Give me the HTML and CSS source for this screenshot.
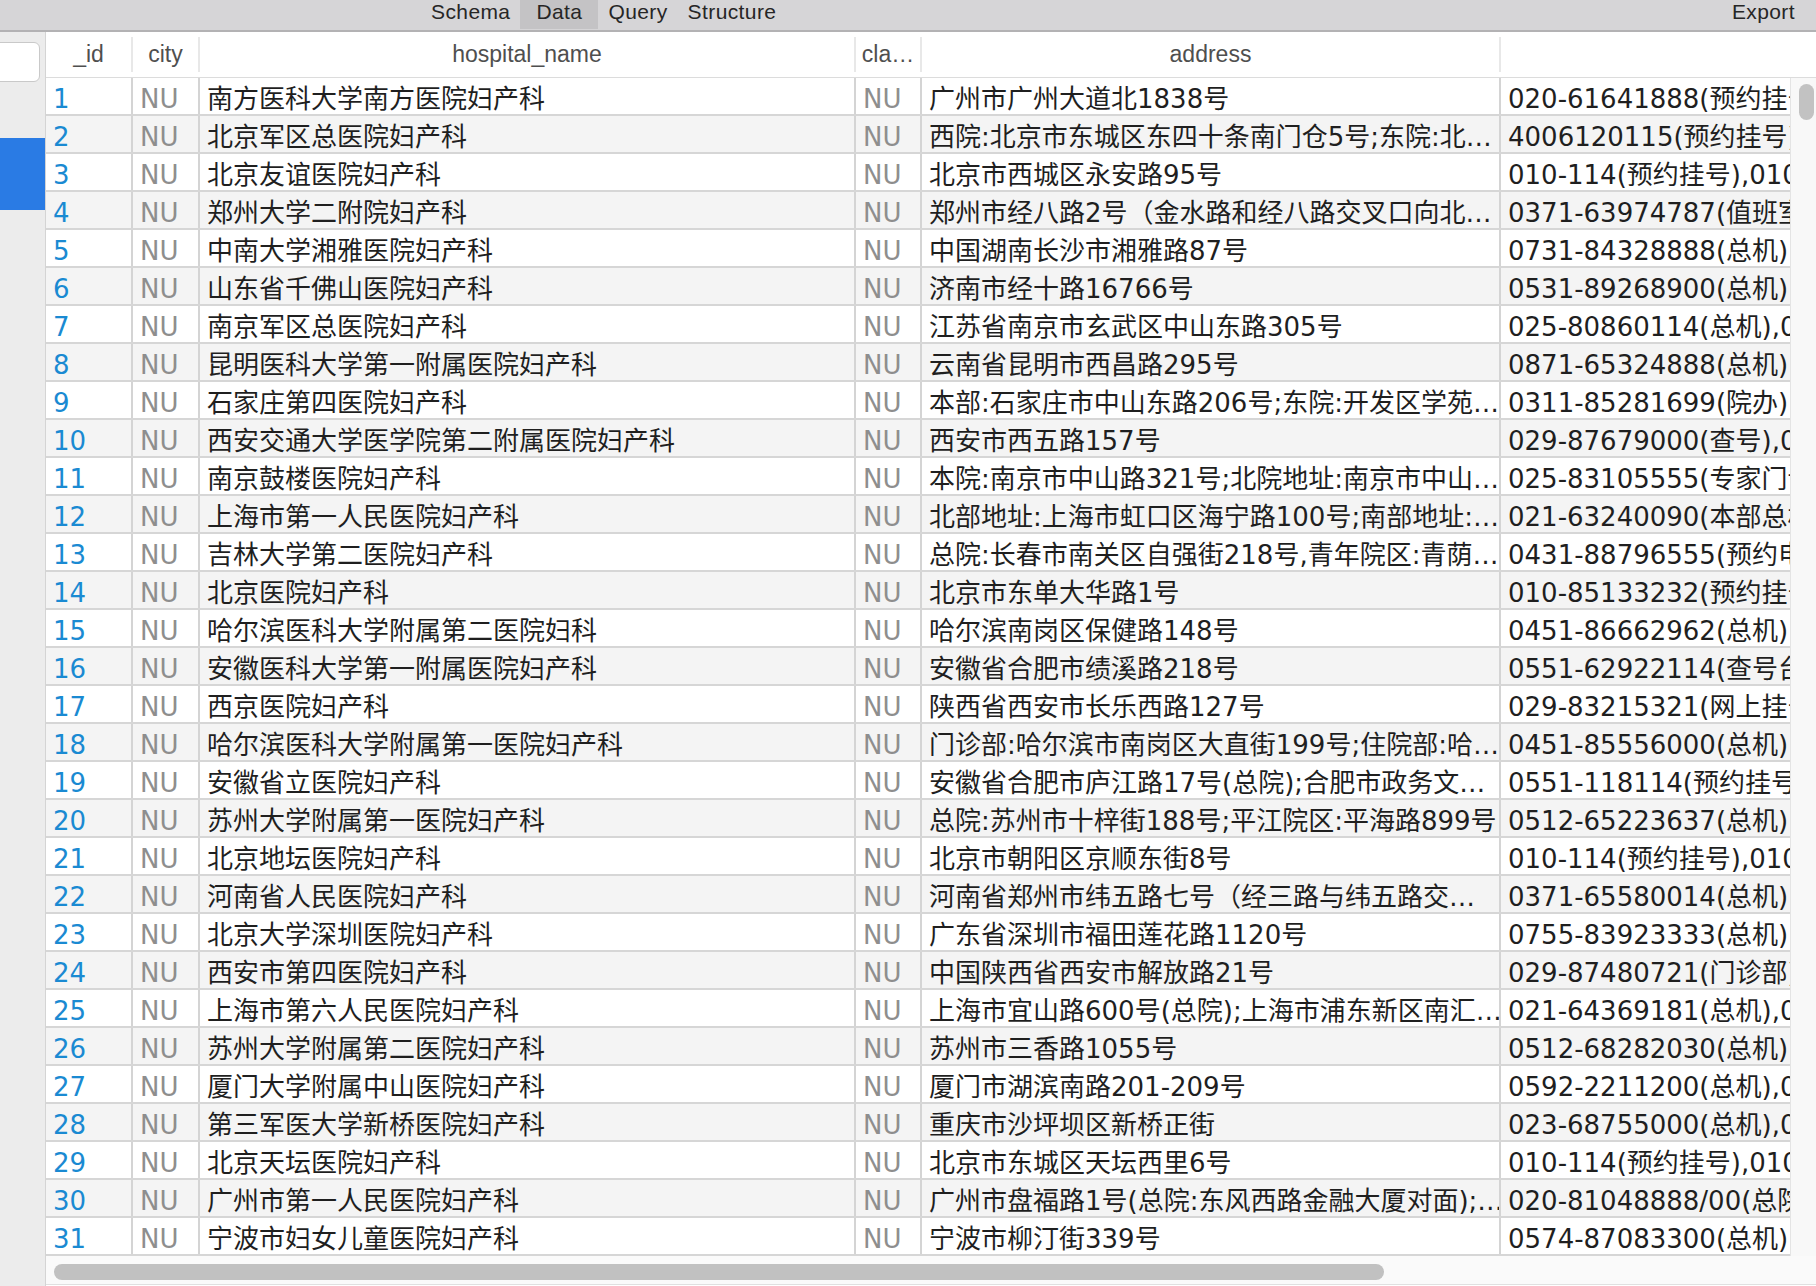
FILE: index.html
```html
<!DOCTYPE html>
<html lang="zh-CN">
<head>
<meta charset="utf-8">
<title>Data</title>
<link rel="stylesheet" href="styles.css">
</head>
<body>
<div class="toolbar">
  <nav class="tabs">
    <span class="tab">Schema</span>
    <span class="tab active">Data</span>
    <span class="tab">Query</span>
    <span class="tab">Structure</span>
  </nav>
  <span class="export">Export</span>
</div>
<div class="main">
  <aside class="sidebar">
    <div class="search"></div>
    <div class="selected"></div>
  </aside>
  <section class="grid">
    <div class="head">
      <span class="h">_id</span>
      <span class="h">city</span>
      <span class="h">hospital_name</span>
      <span class="h">cla…</span>
      <span class="h">address</span>
      <span class="h last"></span>
    </div>
    <div class="body">
      <div class="rows">
        <div class="row"><span class="c id">1</span><span class="c nu">NU</span><span class="c">南方医科大学南方医院妇产科</span><span class="c nu">NU</span><span class="c">广州市广州大道北1838号</span><span class="c last">020-61641888(预约挂号)</span></div>
        <div class="row"><span class="c id">2</span><span class="c nu">NU</span><span class="c">北京军区总医院妇产科</span><span class="c nu">NU</span><span class="c">西院:北京市东城区东四十条南门仓5号;东院:北…</span><span class="c last">4006120115(预约挂号)</span></div>
        <div class="row"><span class="c id">3</span><span class="c nu">NU</span><span class="c">北京友谊医院妇产科</span><span class="c nu">NU</span><span class="c">北京市西城区永安路95号</span><span class="c last">010-114(预约挂号),010-63014411</span></div>
        <div class="row"><span class="c id">4</span><span class="c nu">NU</span><span class="c">郑州大学二附院妇产科</span><span class="c nu">NU</span><span class="c">郑州市经八路2号（金水路和经八路交叉口向北…</span><span class="c last">0371-63974787(值班室)</span></div>
        <div class="row"><span class="c id">5</span><span class="c nu">NU</span><span class="c">中南大学湘雅医院妇产科</span><span class="c nu">NU</span><span class="c">中国湖南长沙市湘雅路87号</span><span class="c last">0731-84328888(总机)</span></div>
        <div class="row"><span class="c id">6</span><span class="c nu">NU</span><span class="c">山东省千佛山医院妇产科</span><span class="c nu">NU</span><span class="c">济南市经十路16766号</span><span class="c last">0531-89268900(总机)</span></div>
        <div class="row"><span class="c id">7</span><span class="c nu">NU</span><span class="c">南京军区总医院妇产科</span><span class="c nu">NU</span><span class="c">江苏省南京市玄武区中山东路305号</span><span class="c last">025-80860114(总机),025-80860000</span></div>
        <div class="row"><span class="c id">8</span><span class="c nu">NU</span><span class="c">昆明医科大学第一附属医院妇产科</span><span class="c nu">NU</span><span class="c">云南省昆明市西昌路295号</span><span class="c last">0871-65324888(总机)</span></div>
        <div class="row"><span class="c id">9</span><span class="c nu">NU</span><span class="c">石家庄第四医院妇产科</span><span class="c nu">NU</span><span class="c">本部:石家庄市中山东路206号;东院:开发区学苑…</span><span class="c last">0311-85281699(院办)</span></div>
        <div class="row"><span class="c id">10</span><span class="c nu">NU</span><span class="c">西安交通大学医学院第二附属医院妇产科</span><span class="c nu">NU</span><span class="c">西安市西五路157号</span><span class="c last">029-87679000(查号),029-87678888</span></div>
        <div class="row"><span class="c id">11</span><span class="c nu">NU</span><span class="c">南京鼓楼医院妇产科</span><span class="c nu">NU</span><span class="c">本院:南京市中山路321号;北院地址:南京市中山…</span><span class="c last">025-83105555(专家门诊)</span></div>
        <div class="row"><span class="c id">12</span><span class="c nu">NU</span><span class="c">上海市第一人民医院妇产科</span><span class="c nu">NU</span><span class="c">北部地址:上海市虹口区海宁路100号;南部地址:…</span><span class="c last">021-63240090(本部总机)</span></div>
        <div class="row"><span class="c id">13</span><span class="c nu">NU</span><span class="c">吉林大学第二医院妇产科</span><span class="c nu">NU</span><span class="c">总院:长春市南关区自强街218号,青年院区:青荫…</span><span class="c last">0431-88796555(预约电话)</span></div>
        <div class="row"><span class="c id">14</span><span class="c nu">NU</span><span class="c">北京医院妇产科</span><span class="c nu">NU</span><span class="c">北京市东单大华路1号</span><span class="c last">010-85133232(预约挂号)</span></div>
        <div class="row"><span class="c id">15</span><span class="c nu">NU</span><span class="c">哈尔滨医科大学附属第二医院妇科</span><span class="c nu">NU</span><span class="c">哈尔滨南岗区保健路148号</span><span class="c last">0451-86662962(总机)</span></div>
        <div class="row"><span class="c id">16</span><span class="c nu">NU</span><span class="c">安徽医科大学第一附属医院妇产科</span><span class="c nu">NU</span><span class="c">安徽省合肥市绩溪路218号</span><span class="c last">0551-62922114(查号台)</span></div>
        <div class="row"><span class="c id">17</span><span class="c nu">NU</span><span class="c">西京医院妇产科</span><span class="c nu">NU</span><span class="c">陕西省西安市长乐西路127号</span><span class="c last">029-83215321(网上挂号)</span></div>
        <div class="row"><span class="c id">18</span><span class="c nu">NU</span><span class="c">哈尔滨医科大学附属第一医院妇产科</span><span class="c nu">NU</span><span class="c">门诊部:哈尔滨市南岗区大直街199号;住院部:哈…</span><span class="c last">0451-85556000(总机)</span></div>
        <div class="row"><span class="c id">19</span><span class="c nu">NU</span><span class="c">安徽省立医院妇产科</span><span class="c nu">NU</span><span class="c">安徽省合肥市庐江路17号(总院);合肥市政务文…</span><span class="c last">0551-118114(预约挂号)</span></div>
        <div class="row"><span class="c id">20</span><span class="c nu">NU</span><span class="c">苏州大学附属第一医院妇产科</span><span class="c nu">NU</span><span class="c">总院:苏州市十梓街188号;平江院区:平海路899号</span><span class="c last">0512-65223637(总机)</span></div>
        <div class="row"><span class="c id">21</span><span class="c nu">NU</span><span class="c">北京地坛医院妇产科</span><span class="c nu">NU</span><span class="c">北京市朝阳区京顺东街8号</span><span class="c last">010-114(预约挂号),010-84322000</span></div>
        <div class="row"><span class="c id">22</span><span class="c nu">NU</span><span class="c">河南省人民医院妇产科</span><span class="c nu">NU</span><span class="c">河南省郑州市纬五路七号（经三路与纬五路交…</span><span class="c last">0371-65580014(总机)</span></div>
        <div class="row"><span class="c id">23</span><span class="c nu">NU</span><span class="c">北京大学深圳医院妇产科</span><span class="c nu">NU</span><span class="c">广东省深圳市福田莲花路1120号</span><span class="c last">0755-83923333(总机)</span></div>
        <div class="row"><span class="c id">24</span><span class="c nu">NU</span><span class="c">西安市第四医院妇产科</span><span class="c nu">NU</span><span class="c">中国陕西省西安市解放路21号</span><span class="c last">029-87480721(门诊部)</span></div>
        <div class="row"><span class="c id">25</span><span class="c nu">NU</span><span class="c">上海市第六人民医院妇产科</span><span class="c nu">NU</span><span class="c">上海市宜山路600号(总院);上海市浦东新区南汇…</span><span class="c last">021-64369181(总机),021-38297000</span></div>
        <div class="row"><span class="c id">26</span><span class="c nu">NU</span><span class="c">苏州大学附属第二医院妇产科</span><span class="c nu">NU</span><span class="c">苏州市三香路1055号</span><span class="c last">0512-68282030(总机)</span></div>
        <div class="row"><span class="c id">27</span><span class="c nu">NU</span><span class="c">厦门大学附属中山医院妇产科</span><span class="c nu">NU</span><span class="c">厦门市湖滨南路201-209号</span><span class="c last">0592-2211200(总机),0592-2292114</span></div>
        <div class="row"><span class="c id">28</span><span class="c nu">NU</span><span class="c">第三军医大学新桥医院妇产科</span><span class="c nu">NU</span><span class="c">重庆市沙坪坝区新桥正街</span><span class="c last">023-68755000(总机),023-68774000</span></div>
        <div class="row"><span class="c id">29</span><span class="c nu">NU</span><span class="c">北京天坛医院妇产科</span><span class="c nu">NU</span><span class="c">北京市东城区天坛西里6号</span><span class="c last">010-114(预约挂号),010-67096611</span></div>
        <div class="row"><span class="c id">30</span><span class="c nu">NU</span><span class="c">广州市第一人民医院妇产科</span><span class="c nu">NU</span><span class="c">广州市盘福路1号(总院:东风西路金融大厦对面);…</span><span class="c last">020-81048888/00(总院)</span></div>
        <div class="row"><span class="c id">31</span><span class="c nu">NU</span><span class="c">宁波市妇女儿童医院妇产科</span><span class="c nu">NU</span><span class="c">宁波市柳汀街339号</span><span class="c last">0574-87083300(总机)</span></div>
      </div>
      <div class="vscroll"><div class="vthumb"></div></div>
    </div>
    <div class="hscroll"><div class="hthumb"></div></div>
  </section>
</div>
</body>
</html>
```

FILE: styles.css
```css
* { box-sizing: border-box; }

html, body {
  margin: 0;
  padding: 0;
  width: 1816px;
  height: 1286px;
  overflow: hidden;
  background: #ececec;
}

body {
  display: flex;
  flex-direction: column;
  font-family: "Liberation Sans", Arial, sans-serif;
}

/* ---------- toolbar ---------- */
.toolbar {
  flex: 0 0 auto;
  height: 32px;
  display: flex;
  align-items: flex-start;
  justify-content: space-between;
  background: #d6d5d7;
  border-bottom: 2px solid #b3b2b4;
  font-size: 21px;
  line-height: 24px;
  letter-spacing: 0.4px;
  color: #262626;
}

.tabs {
  display: flex;
  padding-left: 421px;
}

.tab {
  height: 29px;
  padding: 0 10px;
}

.tab.active {
  background: #c4c3c5;
  padding: 0 16px;
}

.export {
  padding-right: 21px;
}

/* ---------- main ---------- */
.main {
  flex: 1 1 auto;
  display: flex;
  min-height: 0;
}

.sidebar {
  flex: 0 0 46px;
  background: #ececec;
  border-right: 1px solid #d4d4d4;
  padding-top: 10px;
  overflow: hidden;
}

.search {
  width: 48px;
  height: 40px;
  margin-left: -8px;
  background: #ffffff;
  border: 1px solid #c9c9c9;
  border-radius: 6px;
}

.selected {
  margin-top: 56px;
  height: 72px;
  background: #2a7be4;
}

/* ---------- grid ---------- */
.grid {
  flex: 1 1 auto;
  display: flex;
  flex-direction: column;
  background: #ffffff;
  min-width: 0;
}

.head,
.row {
  display: grid;
  grid-template-columns: 87px 67px 656px 66px 579px 1fr;
}

.head {
  background: #ffffff;
  padding: 5px 0;
  border-bottom: 1px solid #dcdcdc;
  font-size: 23px;
  line-height: 35px;
  color: #4f4f4f;
}

.h {
  height: 35px;
  text-align: center;
  border-right: 2px solid #e8e8e8;
  white-space: nowrap;
  overflow: hidden;
}

.h.last {
  border-right: none;
}

.body {
  display: flex;
}

.rows {
  flex: 1 1 auto;
  min-width: 0;
}

.row {
  height: 38px;
  border-bottom: 2px solid #d6d6d6;
  background: #ffffff;
  font-family: "DejaVu Sans", "Noto Sans CJK SC", sans-serif;
  font-size: 26px;
  color: #1f1f1f;
}

.row:nth-child(even) {
  background: #f4f4f4;
}

.c {
  height: 36px;
  line-height: 42px;
  padding-left: 7px;
  white-space: nowrap;
  overflow: hidden;
  border-right: 2px solid #d4d4d4;
}

.c.last {
  border-right: none;
}

.c.id {
  color: #1a8ad2;
}

.c.nu {
  color: #8e8e8e;
}

.vscroll {
  flex: 0 0 26px;
  background: #f8f8f8;
  border-left: 1px solid #e4e4e4;
  padding: 6px 0 0 8px;
}

.vthumb {
  width: 15px;
  height: 36px;
  border-radius: 8px;
  background: #c2c2c2;
}

.hscroll {
  height: 29px;
  background: #fafafa;
  border-bottom: 1px solid #e0e0e0;
  padding: 8px 0 0 8px;
}

.hthumb {
  width: 1330px;
  height: 16px;
  border-radius: 8px;
  background: #c1c1c1;
}
```
